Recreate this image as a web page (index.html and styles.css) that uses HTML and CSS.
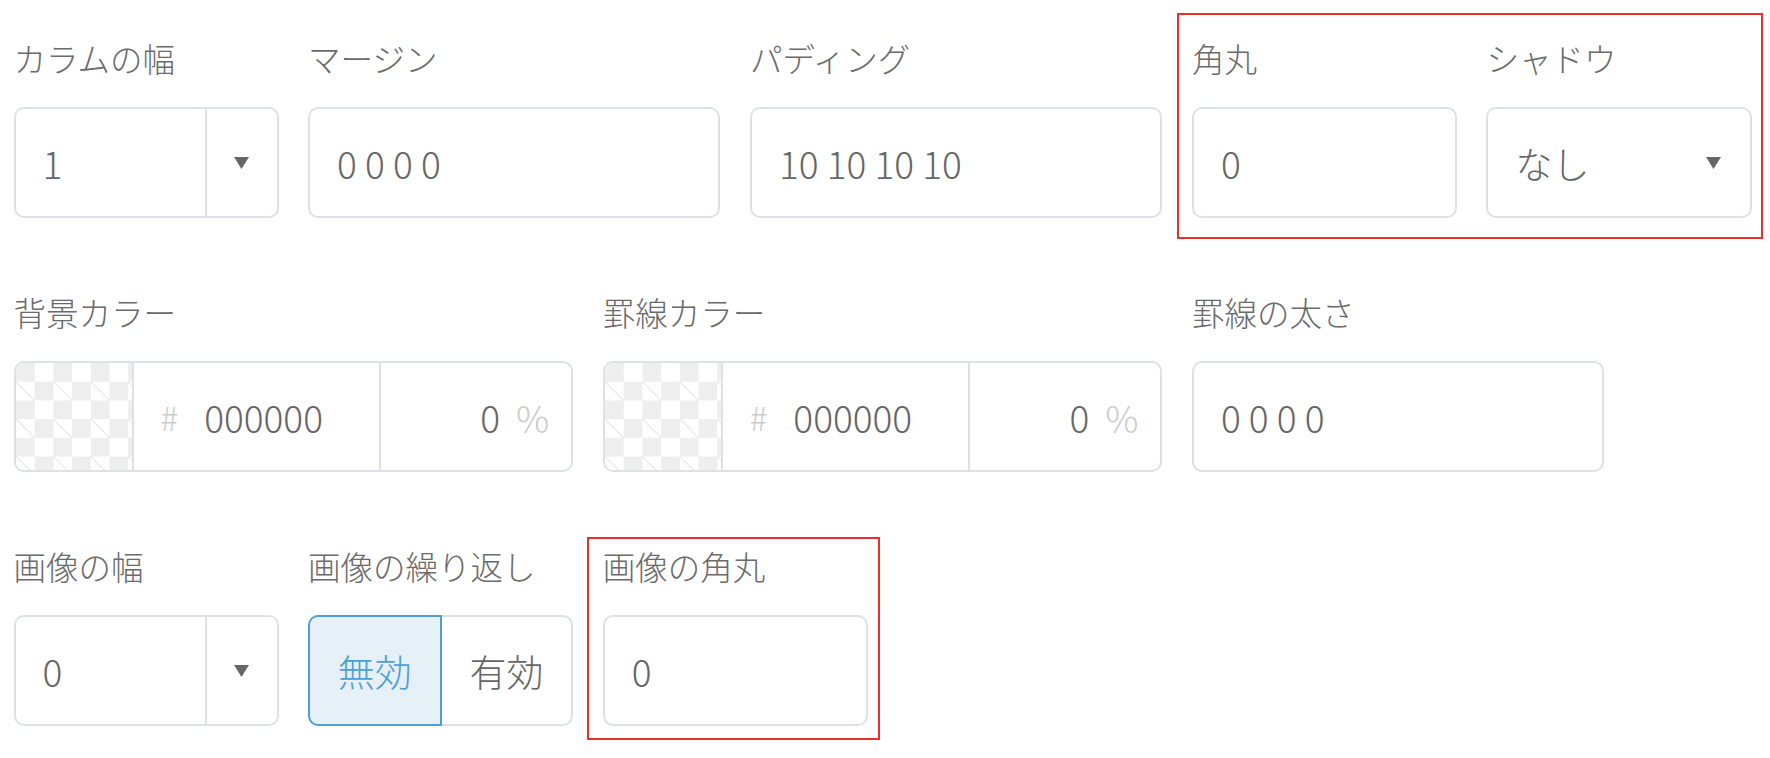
FILE: index.html
```html
<!DOCTYPE html>
<html lang="ja">
<head>
<meta charset="utf-8">
<title>Settings</title>
<link rel="stylesheet" href="styles.css">
</head>
<body>
<div class="panel">
  <div class="grid">
    <div class="field span2">
      <div class="label">カラムの幅</div>
      <div class="box select">
        <span class="val">1</span>
        <span class="arrow-cell"><svg class="tri" viewBox="0 0 15 12"><polygon points="0,0 15,0 7.5,12"/></svg></span>
      </div>
    </div>
    <div class="field span3">
      <div class="label">マージン</div>
      <div class="box"><span class="val">0 0 0 0</span></div>
    </div>
    <div class="field span3">
      <div class="label">パディング</div>
      <div class="box"><span class="val">10 10 10 10</span></div>
    </div>
    <div class="field span2">
      <div class="label">角丸</div>
      <div class="box"><span class="val">0</span></div>
    </div>
    <div class="field span2">
      <div class="label">シャドウ</div>
      <div class="box select plain">
        <span class="val">なし</span>
        <svg class="tri" viewBox="0 0 15 12"><polygon points="0,0 15,0 7.5,12"/></svg>
      </div>
    </div>

    <div class="field span4">
      <div class="label">背景カラー</div>
      <div class="box color">
        <svg class="swatch" viewBox="0 0 116 107" preserveAspectRatio="xMinYMin slice">
          <defs>
            <pattern id="chk1" width="37.4" height="37.4" patternUnits="userSpaceOnUse">
              <rect width="37.4" height="37.4" fill="#ffffff"/>
              <rect x="0" y="0" width="18.7" height="18.7" fill="#eeeeee"/>
              <rect x="18.7" y="18.7" width="18.7" height="18.7" fill="#eeeeee"/>
              <line x1="0" y1="18.7" x2="18.7" y2="37.4" stroke="#cfcfcf" stroke-width="0.8"/>
            </pattern>
          </defs>
          <rect width="116" height="107" fill="url(#chk1)"/>
        </svg>
        <span class="hex"><span class="hash">#</span><span class="val">000000</span></span>
        <span class="pct"><span class="val">0</span><span class="unit">%</span></span>
      </div>
    </div>
    <div class="field span4">
      <div class="label">罫線カラー</div>
      <div class="box color">
        <svg class="swatch" viewBox="0 0 116 107" preserveAspectRatio="xMinYMin slice">
          <defs>
            <pattern id="chk2" width="37.4" height="37.4" patternUnits="userSpaceOnUse">
              <rect width="37.4" height="37.4" fill="#ffffff"/>
              <rect x="0" y="0" width="18.7" height="18.7" fill="#eeeeee"/>
              <rect x="18.7" y="18.7" width="18.7" height="18.7" fill="#eeeeee"/>
              <line x1="0" y1="18.7" x2="18.7" y2="37.4" stroke="#cfcfcf" stroke-width="0.8"/>
            </pattern>
          </defs>
          <rect width="116" height="107" fill="url(#chk2)"/>
        </svg>
        <span class="hex"><span class="hash">#</span><span class="val">000000</span></span>
        <span class="pct"><span class="val">0</span><span class="unit">%</span></span>
      </div>
    </div>
    <div class="field span3">
      <div class="label">罫線の太さ</div>
      <div class="box"><span class="val">0 0 0 0</span></div>
    </div>
    <div class="spacer"></div>

    <div class="field span2">
      <div class="label">画像の幅</div>
      <div class="box select">
        <span class="val">0</span>
        <span class="arrow-cell"><svg class="tri" viewBox="0 0 15 12"><polygon points="0,0 15,0 7.5,12"/></svg></span>
      </div>
    </div>
    <div class="field span2">
      <div class="label">画像の繰り返し</div>
      <div class="seg">
        <span class="seg-item active">無効</span>
        <span class="seg-item">有効</span>
      </div>
    </div>
    <div class="field span2">
      <div class="label">画像の角丸</div>
      <div class="box"><span class="val">0</span></div>
    </div>
  </div>
  <div class="mark mark1"></div>
  <div class="mark mark2"></div>
</div>
</body>
</html>
```
FILE: styles.css
```css
html, body {
  margin: 0;
  padding: 0;
  background: #ffffff;
}
body {
  font-family: "Noto Sans CJK JP", "Noto Sans", sans-serif;
  font-weight: 300;
  color: #666666;
}
.panel {
  position: relative;
  width: 1770px;
  height: 758px;
  padding: 38px 0 0 13.5px;
  box-sizing: border-box;
}
.grid {
  display: grid;
  grid-template-columns: repeat(12, 117.8px);
  column-gap: 29.5px;
  row-gap: 74px;
}
.span2 { grid-column: span 2; }
.span3 { grid-column: span 3; }
.span4 { grid-column: span 4; }
.spacer { grid-column: span 1; }
.field {
  display: flex;
  flex-direction: column;
}
.label {
  height: 40px;
  line-height: 40px;
  font-size: 32.5px;
  color: #6b6b6b;
  margin-bottom: 29px;
  white-space: nowrap;
}
.box {
  height: 111px;
  box-sizing: border-box;
  border: 2px solid #dee1e8;
  border-radius: 10px;
  display: flex;
  align-items: center;
  padding-left: 27px;
  font-size: 37px;
  color: #666666;
  overflow: hidden;
}
.val { white-space: pre; }
.select .val { flex: 1; }
.arrow-cell {
  width: 70px;
  align-self: stretch;
  border-left: 2px solid #dee1e8;
  display: flex;
  align-items: center;
  justify-content: center;
}
.tri {
  width: 15px;
  height: 12px;
  fill: #666666;
}
.plain { padding-right: 29px; }

.color { padding-left: 0; }
.swatch {
  width: 116px;
  height: 107px;
  flex: none;
  display: block;
}
.hex {
  width: 247px;
  align-self: stretch;
  border-left: 2px solid #dee1e8;
  display: flex;
  align-items: center;
  padding-left: 27px;
  box-sizing: border-box;
}
.hash {
  color: #cccccc;
  margin-right: 26px;
  font-size: 33px;
}
.pct {
  flex: 1;
  align-self: stretch;
  border-left: 2px solid #dee1e8;
  display: flex;
  align-items: center;
  justify-content: flex-end;
  padding-right: 22px;
}
.unit {
  color: #cccccc;
  margin-left: 16px;
}

.seg {
  height: 111px;
  display: flex;
  font-size: 37px;
}
.seg-item {
  flex: 1;
  display: flex;
  align-items: center;
  justify-content: center;
  box-sizing: border-box;
  border: 2px solid #dee1e8;
  border-left: none;
  border-radius: 0 10px 10px 0;
  color: #666666;
}
.seg-item.active {
  border: 2px solid #4e9fd6;
  border-radius: 10px 0 0 10px;
  background: #e6f0f7;
  color: #4e9fd6;
}

.mark {
  position: absolute;
  border: 2px solid #e8302a;
  box-sizing: border-box;
}
.mark1 {
  left: 1177px;
  top: 13px;
  width: 586px;
  height: 226px;
}
.mark2 {
  left: 587px;
  top: 537px;
  width: 293px;
  height: 203px;
}
```
